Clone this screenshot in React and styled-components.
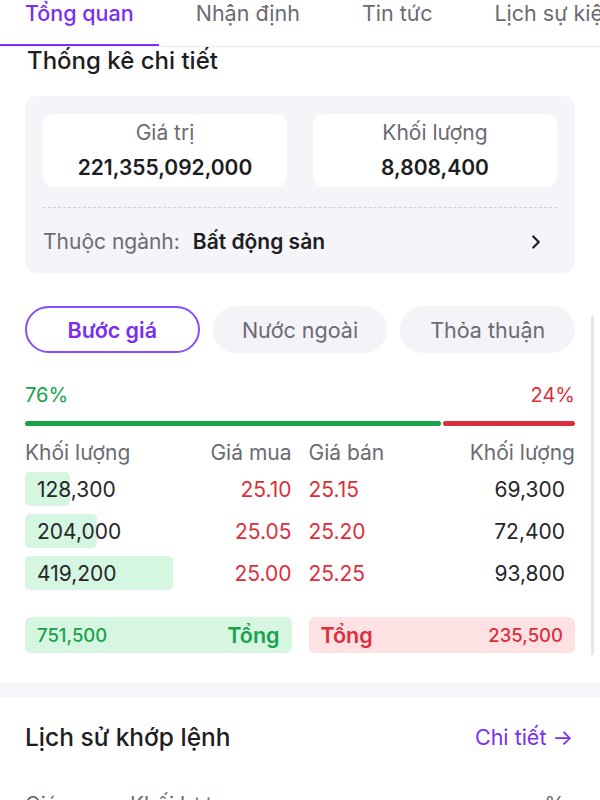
import styled, { createGlobalStyle } from "styled-components";
import { ChevronRight } from "lucide-react";

const GlobalStyle = createGlobalStyle`
  body {
    margin: 0;
    background: #fff;
    font-family: Inter, "Noto Sans", sans-serif;
    color: #1d1d22;
    overflow: hidden;
  }
`;

const purple = "#7a2ff0";
const green = "#16a34a";
const red = "#dc2f3c";

const Page = styled.div`
  width: 600px;
  height: 800px;
  position: relative;
  overflow: hidden;
`;

const TabBar = styled.div`
  display: flex;
  gap: 12px;
  height: 46px;
  border-bottom: 1px solid #ededf0;
  white-space: nowrap;
  overflow: hidden;
`;

const Tab = styled.div`
  padding: 0 25px;
  font-size: 21.5px;
  line-height: 26px;
  color: ${(p) => (p.$active ? purple : "#6b6b72")};
  font-weight: ${(p) => (p.$active ? 500 : 400)};
  border-bottom: 3px solid ${(p) => (p.$active ? purple : "transparent")};
  box-sizing: border-box;
  height: 47px;
  flex-shrink: 0;
`;

const Heading = styled.h2`
  margin: 0;
  padding: 0 27px;
  font-size: 24px;
  line-height: 28px;
  font-weight: 500;
  color: #1d1d22;
`;

const StatCard = styled.div`
  margin: 21px 25px 0;
  padding: 18px 18px 17px;
  background: #f4f4f9;
  border-radius: 12px;
`;

const StatRow = styled.div`
  display: flex;
  gap: 26px;
`;

const StatBox = styled.div`
  flex: 1;
  height: 73px;
  box-sizing: border-box;
  padding-top: 7px;
  background: #fff;
  border-radius: 10px;
  text-align: center;
`;

const StatLabel = styled.div`
  font-size: 21px;
  line-height: 24px;
  color: #6b6b72;
`;

const StatValue = styled.div`
  margin-top: 9px;
  font-size: 21px;
  line-height: 28px;
  font-weight: 600;
  color: #1d1d22;
`;

const Dashed = styled.div`
  margin-top: 20px;
  border-top: 1px dashed #cfcfd6;
`;

const SectorRow = styled.div`
  display: flex;
  align-items: center;
  padding-top: 20px;
  font-size: 21px;
  line-height: 28px;
`;

const SectorLabel = styled.span`
  color: #6b6b72;
  margin-right: 13px;
`;

const SectorValue = styled.span`
  font-weight: 600;
  color: #1d1d22;
  flex: 1;
`;

const Segments = styled.div`
  display: flex;
  gap: 13px;
  margin: 33px 25px 0;
`;

const Segment = styled.div`
  flex: 1;
  height: 47px;
  box-sizing: border-box;
  border-radius: 24px;
  display: flex;
  align-items: center;
  justify-content: center;
  font-size: 21.5px;
  background: ${(p) => (p.$active ? "#fff" : "#f3f3f8")};
  border: 2px solid ${(p) => (p.$active ? "#8a4ef5" : "transparent")};
  color: ${(p) => (p.$active ? purple : "#6b6b72")};
  font-weight: ${(p) => (p.$active ? 600 : 400)};
`;

const Percents = styled.div`
  display: flex;
  justify-content: space-between;
  margin: 30px 25px 0;
  font-size: 20px;
  line-height: 24px;
`;

const Pct = styled.span`
  color: ${(p) => p.$color};
`;

const RatioBar = styled.div`
  display: flex;
  gap: 2px;
  height: 5px;
  margin: 14px 25px 0;
`;

const RatioPart = styled.div`
  background: ${(p) => p.$color};
  border-radius: 3px;
`;

const Book = styled.div`
  margin: 14px 25px 0;
`;

const BookRow = styled.div`
  display: grid;
  grid-template-columns: 1fr 1fr;
  column-gap: 17px;
  height: ${(p) => (p.$head ? "26px" : "42px")};
  align-items: center;
  font-size: 21px;
  margin-bottom: ${(p) => (p.$head ? "2px" : "0")};
`;

const Half = styled.div`
  display: flex;
  justify-content: space-between;
  align-items: center;
  position: relative;
  height: 100%;
  padding-right: ${(p) => (p.$padRight ? "10px" : "0")};
`;

const HeadText = styled.span`
  color: #6b6b72;
  line-height: 26px;
`;

const Vol = styled.span`
  position: relative;
  color: #26262b;
  padding-left: ${(p) => (p.$pad ? "12px" : "0")};
`;

const VolBar = styled.div`
  position: absolute;
  left: 0;
  top: 4px;
  height: 34px;
  background: #d5f6e0;
  border-radius: 5px;
`;

const Price = styled.span`
  color: ${red};
`;

const Totals = styled.div`
  display: grid;
  grid-template-columns: 1fr 1fr;
  column-gap: 17px;
  margin: 23px 25px 0;
`;

const TotalBox = styled.div`
  height: 36px;
  border-radius: 6px;
  padding: 0 12px;
  display: flex;
  justify-content: space-between;
  align-items: center;
  background: ${(p) => p.$bg};
  color: ${(p) => p.$color};
`;

const TotalNum = styled.span`
  font-size: 18.5px;
  font-weight: 500;
`;

const TotalWord = styled.span`
  font-size: 21.5px;
  font-weight: 600;
`;

const Band = styled.div`
  height: 14px;
  margin-top: 30px;
  background: #f5f5fa;
`;

const HistoryHead = styled.div`
  display: flex;
  justify-content: space-between;
  align-items: center;
  margin: 25px 27px 0 25px;
  height: 30px;
`;

const HistoryTitle = styled.h3`
  margin: 0;
  font-size: 24.5px;
  font-weight: 500;
  color: #1d1d22;
`;

const DetailLink = styled.span`
  font-size: 21.5px;
  color: ${purple};
`;

const HistoryCols = styled.div`
  display: flex;
  margin: 40px 35px 0 25px;
  font-size: 21px;
  line-height: 26px;
  color: #6b6b72;
`;

const ColGia = styled.span`
  width: 105px;
`;

const ColRest = styled.span`
  flex: 1;
`;

const ScrollThumb = styled.div`
  position: absolute;
  right: 6px;
  top: 315px;
  width: 3px;
  height: 340px;
  border-radius: 2px;
  background: #e6e6ea;
`;

const tabs = ["Tổng quan", "Nhận định", "Tin tức", "Lịch sự kiện"];

const book = [
  { bv: 128300, bp: "25.10", sp: "25.15", sv: "69,300" },
  { bv: 204000, bp: "25.05", sp: "25.20", sv: "72,400" },
  { bv: 419200, bp: "25.00", sp: "25.25", sv: "93,800" },
];

const maxVol = Math.max(...book.map((r) => r.bv));

export default function App() {
  return (
    <Page>
      <GlobalStyle />
      <TabBar>
        {tabs.map((t, i) => (
          <Tab key={t} $active={i === 0}>
            {t}
          </Tab>
        ))}
      </TabBar>

      <Heading>Thống kê chi tiết</Heading>

      <StatCard>
        <StatRow>
          <StatBox>
            <StatLabel>Giá trị</StatLabel>
            <StatValue>221,355,092,000</StatValue>
          </StatBox>
          <StatBox>
            <StatLabel>Khối lượng</StatLabel>
            <StatValue>8,808,400</StatValue>
          </StatBox>
        </StatRow>
        <Dashed />
        <SectorRow>
          <SectorLabel>Thuộc ngành:</SectorLabel>
          <SectorValue>Bất động sản</SectorValue>
          <ChevronRight size={22} strokeWidth={2.4} color="#1d1d22" style={{ marginRight: 10 }} />
        </SectorRow>
      </StatCard>

      <Segments>
        <Segment $active>Bước giá</Segment>
        <Segment>Nước ngoài</Segment>
        <Segment>Thỏa thuận</Segment>
      </Segments>

      <Percents>
        <Pct $color={green}>76%</Pct>
        <Pct $color={red}>24%</Pct>
      </Percents>
      <RatioBar>
        <RatioPart $color={green} style={{ flex: 76 }} />
        <RatioPart $color={red} style={{ flex: 24 }} />
      </RatioBar>

      <Book>
        <BookRow $head>
          <Half>
            <HeadText>Khối lượng</HeadText>
            <HeadText>Giá mua</HeadText>
          </Half>
          <Half>
            <HeadText>Giá bán</HeadText>
            <HeadText>Khối lượng</HeadText>
          </Half>
        </BookRow>
        {book.map((r) => (
          <BookRow key={r.bp}>
            <Half>
              <VolBar style={{ width: (r.bv / maxVol) * 148 }} />
              <Vol $pad>{r.bv.toLocaleString("en-US")}</Vol>
              <Price>{r.bp}</Price>
            </Half>
            <Half $padRight>
              <Price>{r.sp}</Price>
              <Vol>{r.sv}</Vol>
            </Half>
          </BookRow>
        ))}
      </Book>

      <Totals>
        <TotalBox $bg="#d7f6e1" $color={green}>
          <TotalNum>751,500</TotalNum>
          <TotalWord>Tổng</TotalWord>
        </TotalBox>
        <TotalBox $bg="#fde1e3" $color={red}>
          <TotalWord>Tổng</TotalWord>
          <TotalNum>235,500</TotalNum>
        </TotalBox>
      </Totals>

      <Band />

      <HistoryHead>
        <HistoryTitle>Lịch sử khớp lệnh</HistoryTitle>
        <DetailLink>Chi tiết →</DetailLink>
      </HistoryHead>

      <HistoryCols>
        <ColGia>Giá</ColGia>
        <ColRest>Khối lượng</ColRest>
        <span>%</span>
      </HistoryCols>

      <ScrollThumb />
    </Page>
  );
}
